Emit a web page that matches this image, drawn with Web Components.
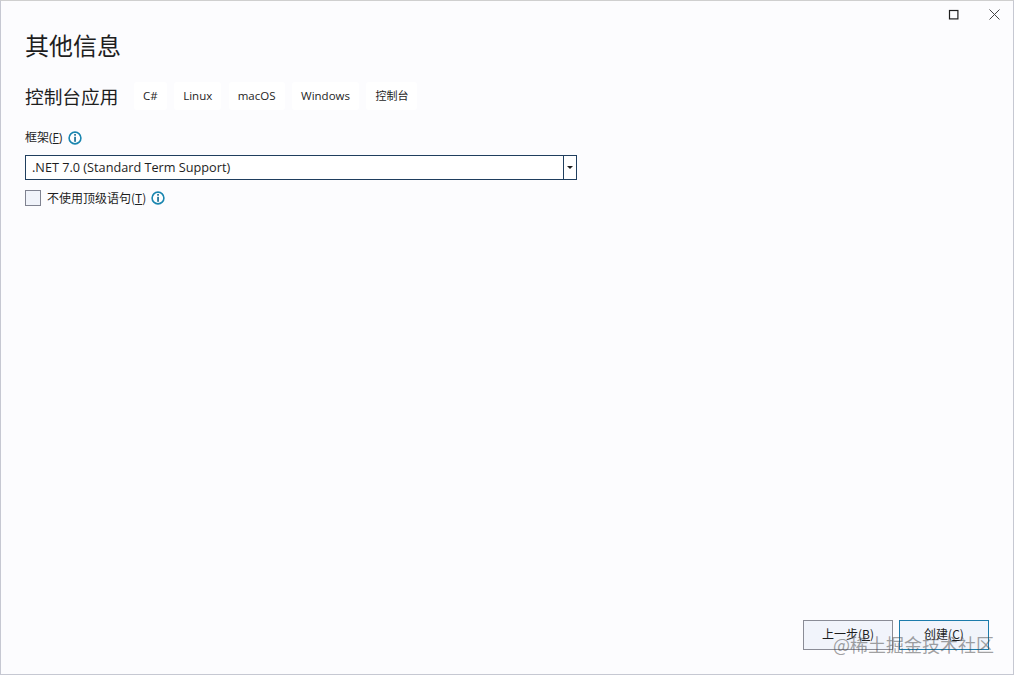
<!DOCTYPE html>
<html lang="zh">
<head>
<meta charset="utf-8">
<title>其他信息</title>
<style>
  html, body { margin: 0; height: 100%; }
  body { font-family: "Open Sans", "Noto Sans CJK SC", sans-serif; color: #1e1e1e; }
</style>
</head>
<body>
<dialog-window>
  <h-title slot="title">其他信息</h-title>
  <project-head slot="head" name="控制台应用">
    <tag-chip>C#</tag-chip>
    <tag-chip>Linux</tag-chip>
    <tag-chip>macOS</tag-chip>
    <tag-chip>Windows</tag-chip>
    <tag-chip cjk>控制台</tag-chip>
  </project-head>
  <combo-field slot="form" value=".NET 7.0 (Standard Term Support)"></combo-field>
  <check-field slot="form"></check-field>
  <dialog-button slot="actions">上一步(<u>B</u>)</dialog-button>
  <dialog-button slot="actions" primary>创建(<u>C</u>)</dialog-button>
</dialog-window>

<script>
const infoIcon = `
  <svg width="14" height="14" viewBox="0 0 14 14" aria-hidden="true">
    <circle cx="7" cy="7" r="5.9" fill="#fff" stroke="#1a86b0" stroke-width="1.6"/>
    <rect x="6.2" y="3" width="1.7" height="1.7" fill="#1a6f96"/>
    <rect x="6.2" y="5.8" width="1.7" height="5" fill="#1a6f96"/>
  </svg>`

customElements.define('dialog-window',
  class extends HTMLElement {
    constructor () {
      super()
      this.attachShadow({ mode: 'open' }).innerHTML = `
        <style>
          :host {
            display: flex;
            flex-direction: column;
            box-sizing: border-box;
            position: relative;
            width: 1014px;
            height: 675px;
            background: #fcfcfe;
            border: 1px solid #c6c8d2;
            border-top-color: #cfcfcf;
          }
          .controls {
            display: flex;
            justify-content: flex-end;
            gap: 30px;
            padding: 8px 13px 0 0;
            height: 11px;
          }
          .content {
            flex: 1;
            display: flex;
            flex-direction: column;
            padding: 8px 24px 0 24px;
          }
          .form {
            display: flex;
            flex-direction: column;
          }
          .actions {
            margin-top: auto;
            display: flex;
            justify-content: flex-end;
            gap: 6px;
            padding: 0 0 24px 0;
          }
          .watermark {
            position: absolute;
            left: 832px;
            top: 630px;
            font: 18px/26px "Noto Sans CJK SC", sans-serif;
            color: rgba(70, 70, 70, 0.5);
            white-space: nowrap;
          }
        </style>
        <div class="controls">
          <svg width="11" height="11" viewBox="0 0 11 11"><rect x="1.5" y="1.5" width="8.4" height="8.4" fill="none" stroke="#1e1e1e" stroke-width="1.2"/></svg>
          <svg width="11" height="11" viewBox="0 0 11 11"><path d="M0.5 0.5 L10.5 10.5 M10.5 0.5 L0.5 10.5" stroke="#444" stroke-width="1" fill="none"/></svg>
        </div>
        <div class="content">
          <slot name="title"></slot>
          <slot name="head"></slot>
          <div class="form"><slot name="form"></slot></div>
          <div class="actions"><slot name="actions"></slot></div>
        </div>
        <div class="watermark">@稀土掘金技术社区</div>
      `
    }
  }
)

customElements.define('h-title',
  class extends HTMLElement {
    constructor () {
      super()
      this.attachShadow({ mode: 'open' }).innerHTML = `
        <style>
          :host { display: block; font: 24px/34px "Noto Sans CJK SC", sans-serif; color: #1e1e1e; }
        </style>
        <slot></slot>
      `
    }
  }
)

customElements.define('project-head',
  class extends HTMLElement {
    constructor () {
      super()
      this.attachShadow({ mode: 'open' }).innerHTML = `
        <style>
          :host { display: flex; align-items: center; margin-top: 19px; height: 30px; }
          .name { font: 18.7px/30px "Noto Sans CJK SC", sans-serif; color: #1e1e1e; width: 94px; margin-right: 15px; white-space: nowrap; }
          .tags { display: flex; gap: 7.5px; }
        </style>
        <div class="name"></div>
        <div class="tags"><slot></slot></div>
      `
      this.shadowRoot.querySelector('.name').textContent = this.getAttribute('name')
    }
  }
)

customElements.define('tag-chip',
  class extends HTMLElement {
    constructor () {
      super()
      this.attachShadow({ mode: 'open' }).innerHTML = `
        <style>
          :host {
            display: block;
            padding: 0 9px;
            background: #fff;
            font: 11.5px/28px "Open Sans", "Noto Sans CJK SC", sans-serif;
            color: #1e1e1e;
            border-radius: 3px;
          }
          :host([cjk]) { font-size: 11px; }
        </style>
        <slot></slot>
      `
    }
  }
)

customElements.define('combo-field',
  class extends HTMLElement {
    constructor () {
      super()
      this.attachShadow({ mode: 'open' }).innerHTML = `
        <style>
          :host { display: block; margin-top: 18px; font: 12px/18px "Open Sans", "Noto Sans CJK SC", sans-serif; color: #1e1e1e; }
          .label { display: flex; align-items: center; gap: 6px; height: 18px; }
          .box {
            display: flex;
            box-sizing: border-box;
            width: 552px;
            height: 25px;
            margin-top: 8px;
            background: #fff;
            border: 1px solid #1f3e5e;
          }
          .value { flex: 1; padding-left: 6px; line-height: 23px; font-size: 12.7px; }
          .arrow {
            width: 12px;
            display: flex;
            align-items: center;
            justify-content: center;
            border-left: 1px solid #1f3e5e;
          }
        </style>
        <div class="label"><span>框架(<u>F</u>)</span>${infoIcon}</div>
        <div class="box">
          <div class="value"></div>
          <div class="arrow"><svg width="6" height="3" viewBox="0 0 6 3"><path d="M0 0H6L3 3Z" fill="#1e1e1e"/></svg></div>
        </div>
      `
      this.shadowRoot.querySelector('.value').textContent = this.getAttribute('value')
    }
  }
)

customElements.define('check-field',
  class extends HTMLElement {
    constructor () {
      super()
      this.attachShadow({ mode: 'open' }).innerHTML = `
        <style>
          :host { display: flex; align-items: center; margin-top: 10px; height: 16px; font: 12px/16px "Noto Sans CJK SC", sans-serif; color: #1e1e1e; }
          .box { box-sizing: border-box; width: 16px; height: 16px; background: #f0f3fa; border: 1px solid #7f8290; margin-right: 6px; }
          .text { margin-right: 5px; }
        </style>
        <div class="box"></div>
        <span class="text">不使用顶级语句(<u>T</u>)</span>${infoIcon}
      `
    }
  }
)

customElements.define('dialog-button',
  class extends HTMLElement {
    constructor () {
      super()
      this.attachShadow({ mode: 'open' }).innerHTML = `
        <style>
          :host {
            display: block;
            box-sizing: border-box;
            width: 90px;
            height: 30px;
            background: #f1f4fb;
            border: 1px solid #8a8c96;
            text-align: center;
            font: 12px/26px "Noto Sans CJK SC", sans-serif;
            color: #1e1e1e;
          }
          :host([primary]) { border-color: #1c7bab; }
        </style>
        <slot></slot>
      `
    }
  }
)
</script>
</body>
</html>
